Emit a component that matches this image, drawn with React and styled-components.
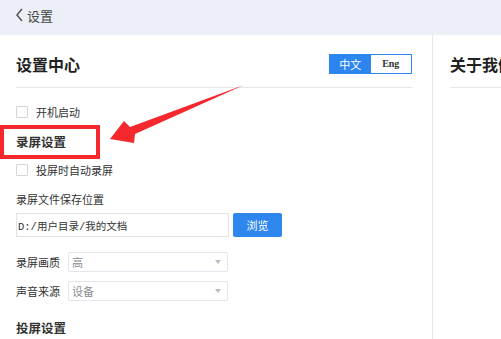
import React from "react";
import styled, { createGlobalStyle } from "styled-components";

const GlobalStyle = createGlobalStyle`
  html, body {
    margin: 0;
    padding: 0;
    background: #fff;
    font-family: "Noto Sans CJK SC", "Noto Sans", sans-serif;
    color: #333;
  }
  * { box-sizing: border-box; }
`;

const Page = styled.div`
  position: relative;
  width: 501px;
  height: 339px;
  overflow: hidden;
  background: #fff;
`;

const TopBar = styled.div`
  height: 35px;
  background: #eceff7;
  display: flex;
  align-items: center;
  padding: 0 0 5px 15px;
  gap: 3px;
  font-size: 13px;
  color: #444;
`;

const Body = styled.div`
  display: flex;
  height: 304px;
`;

const LeftPanel = styled.div`
  width: 433px;
  flex-shrink: 0;
  padding: 0 20px 0 16px;
  border-right: 1px solid #e6e8ef;
`;

const RightPanel = styled.div`
  flex: 1;
  padding-left: 17px;
  white-space: nowrap;
  overflow: hidden;
`;

const Header = styled.div`
  height: 53px;
  padding-top: 5px;
  display: flex;
  align-items: center;
  justify-content: space-between;
  border-bottom: 1px solid #e4e6eb;
`;

const Title = styled.h2`
  margin: 0;
  font-size: 16px;
  font-weight: 700;
  color: #222;
  line-height: 20px;
`;

const LangToggle = styled.div`
  display: flex;
  width: 83px;
  height: 20px;
  border: 1px solid #2d86ef;
`;

const LangOption = styled.div`
  flex: 1;
  display: flex;
  align-items: center;
  justify-content: center;
  font-size: ${(p) => (p.latin ? "10px" : "11px")};
  font-family: ${(p) =>
    p.latin ? '"Liberation Serif", serif' : '"Noto Sans CJK SC", sans-serif'};
  font-weight: ${(p) => (p.latin ? 700 : 400)};
  background: ${(p) => (p.active ? "#2d86ef" : "#fff")};
  color: ${(p) => (p.active ? "#fff" : "#333")};
`;

const Row = styled.div`
  display: flex;
  align-items: center;
  height: ${(p) => p.h || 20}px;
  margin-top: ${(p) => p.mt || 0}px;
  font-size: 11px;
  color: #333;
`;

const CheckBox = styled.span`
  width: 12px;
  height: 12px;
  border: 1px solid #d3d6dd;
  border-radius: 1px;
  margin-right: 8px;
  background: #fff;
`;

const SectionTitle = styled.div`
  margin-top: ${(p) => p.mt}px;
  height: 20px;
  line-height: 20px;
  font-size: 12.5px;
  font-weight: 700;
  color: #333;
`;

const PathInput = styled.div`
  width: 213px;
  height: 24px;
  border: 1px solid #e0e3ea;
  display: flex;
  align-items: center;
  padding-left: 1px;
  font-size: 10.5px;
  font-family: "Liberation Mono", "Noto Sans CJK SC", monospace;
  color: #333;
`;

const BrowseButton = styled.button`
  margin-left: 4px;
  width: 49px;
  height: 24px;
  border: none;
  border-radius: 2px;
  background: #2e87ef;
  color: #fff;
  font-size: 11px;
  font-family: "Noto Sans CJK SC", sans-serif;
  padding: 0;
`;

const FieldLabel = styled.span`
  width: 52px;
  font-size: 11px;
  color: #333;
`;

const Select = styled.div`
  width: 160px;
  height: 20px;
  border: 1px solid #e3e5ec;
  border-radius: 2px;
  display: flex;
  align-items: center;
  justify-content: space-between;
  padding: 0 6px 0 3px;
  font-size: 11px;
  color: #8a8d94;
`;

const Caret = styled.span`
  width: 0;
  height: 0;
  border-left: 3px solid transparent;
  border-right: 3px solid transparent;
  border-top: 4px solid #b9bcc3;
`;

const Highlight = styled.div`
  position: absolute;
  left: 0;
  top: 125px;
  width: 100px;
  height: 34px;
  border: 4px solid #f5282d;
  pointer-events: none;
`;

const ArrowSvg = styled.svg`
  position: absolute;
  left: 0;
  top: 0;
  pointer-events: none;
`;

export default function App() {
  return (
    <>
      <GlobalStyle />
      <Page>
        <TopBar>
          <svg width="9" height="14" viewBox="0 0 9 14">
            <path d="M7 1 L2 7 L7 13" fill="none" stroke="#555" strokeWidth="1.5" />
          </svg>
          <span>设置</span>
        </TopBar>
        <Body>
          <LeftPanel>
            <Header>
              <Title>设置中心</Title>
              <LangToggle>
                <LangOption active>中文</LangOption>
                <LangOption latin>Eng</LangOption>
              </LangToggle>
            </Header>
            <Row mt={14}>
              <CheckBox />
              开机启动
            </Row>
            <SectionTitle mt={10}>录屏设置</SectionTitle>
            <Row mt={8}>
              <CheckBox />
              投屏时自动录屏
            </Row>
            <Row mt={9}>录屏文件保存位置</Row>
            <Row mt={4} h={24}>
              <PathInput>D:/用户目录/我的文档</PathInput>
              <BrowseButton>浏览</BrowseButton>
            </Row>
            <Row mt={15}>
              <FieldLabel>录屏画质</FieldLabel>
              <Select>
                高<Caret />
              </Select>
            </Row>
            <Row mt={9}>
              <FieldLabel>声音来源</FieldLabel>
              <Select>
                设备<Caret />
              </Select>
            </Row>
            <SectionTitle mt={17}>投屏设置</SectionTitle>
          </LeftPanel>
          <RightPanel>
            <Header>
              <Title>关于我们</Title>
            </Header>
          </RightPanel>
        </Body>
        <Highlight />
        <ArrowSvg width="501" height="339">
          <polygon
            points="110,139 124,121 130,127 244,85 135,134 134,143"
            fill="#f5282d"
          />
        </ArrowSvg>
      </Page>
    </>
  );
}
